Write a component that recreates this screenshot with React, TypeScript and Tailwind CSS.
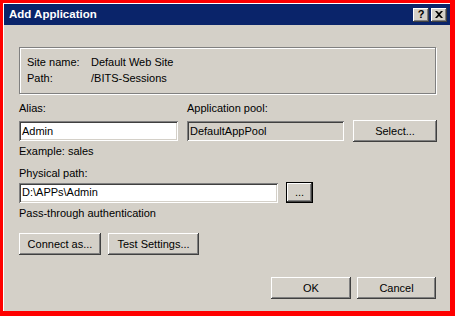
const raised =
  'bg-[#d4d0c8] shadow-[inset_-1px_-1px_#404040,inset_1px_1px_#ffffff,inset_-2px_-2px_#808080,inset_2px_2px_#d4d0c8]';
const sunken =
  'shadow-[inset_1px_1px_#808080,inset_-1px_-1px_#ffffff,inset_2px_2px_#404040,inset_-2px_-2px_#d4d0c8]';

function Button({ label, className = '' }: { label: string; className?: string }) {
  return (
    <div className={`${raised} flex items-center justify-center leading-none ${className}`}>
      {label}
    </div>
  );
}

function TextBox({ value, className = '', disabled = false }: { value: string; className?: string; disabled?: boolean }) {
  return (
    <div
      className={`${sunken} ${disabled ? 'bg-[#d4d0c8]' : 'bg-white'} h-[20px] flex items-center pl-[3px] leading-none ${className}`}
    >
      {value}
    </div>
  );
}

export default function App() {
  return (
    <div className="w-[455px] h-[316px] bg-[#ff0000] pl-[3px] pt-[3px] pr-[5px] pb-[5px] font-['Liberation_Sans',Arial,sans-serif] text-[11px] text-black">
      <div className="h-full flex flex-col bg-[#d4d0c8] border-l border-t border-white">
        {/* Title bar */}
        <div className="h-[21px] bg-[#0a246a] flex items-center justify-between pl-[5px] pr-[3px]">
          <span className="text-white font-bold text-[11.5px] leading-none">Add Application</span>
          <div className="flex gap-[2px]">
            <div className={`${raised} w-[16px] h-[14px] flex items-center justify-center font-bold text-[11px] leading-none`}>
              ?
            </div>
            <div className={`${raised} w-[16px] h-[14px] flex items-center justify-center`}>
              <svg width="8" height="7" viewBox="0 0 8 7">
                <path d="M0 0h2l2 2 2-2h2L5 3.5 8 7H6L4 5 2 7H0l3-3.5z" fill="#000" />
              </svg>
            </div>
          </div>
        </div>

        {/* Body */}
        <div className="flex-1 flex flex-col pl-[15px] pr-[13px]">
          {/* Group box */}
          <div className="mt-[22px] mr-[1px] h-[47px] border border-[#808080] shadow-[inset_1px_1px_#ffffff,1px_1px_#ffffff] pl-[7px] pt-[6px]">
            <div className="flex leading-[16px]">
              <span className="w-[64px]">Site name:</span>
              <span>Default Web Site</span>
            </div>
            <div className="flex leading-[16px]">
              <span className="w-[64px]">Path:</span>
              <span>/BITS-Sessions</span>
            </div>
          </div>

          {/* Alias / app pool */}
          <div className="mt-[8px] flex leading-[13px]">
            <span className="w-[168px]">Alias:</span>
            <span>Application pool:</span>
          </div>
          <div className="mt-[5px] flex items-start">
            <TextBox value="Admin" className="w-[159px] mt-[1px]" />
            <TextBox value="DefaultAppPool" disabled className="w-[157px] ml-[9px] mt-[1px]" />
            <Button label="Select..." className="w-[84px] h-[22px] ml-[9px]" />
          </div>
          <div className="mt-[3px] leading-[13px]">Example: sales</div>

          {/* Physical path */}
          <div className="mt-[9px] leading-[13px]">Physical path:</div>
          <div className="mt-[2px] flex items-center">
            <TextBox value="D:\APPs\Admin" className="w-[259px]" />
            <div className="ml-[8px] w-[27px] h-[21px] border border-black">
              <Button label="..." className="w-full h-full" />
            </div>
          </div>
          <div className="mt-[4px] leading-[13px]">Pass-through authentication</div>

          <div className="mt-[13px] flex gap-[7px]">
            <Button label="Connect as..." className="w-[82px] h-[22px]" />
            <Button label="Test Settings..." className="w-[91px] h-[22px]" />
          </div>

          <div className="mt-[22px] flex justify-end gap-[6px] mr-[1px]">
            <Button label="OK" className="w-[80px] h-[22px]" />
            <Button label="Cancel" className="w-[79px] h-[22px]" />
          </div>
        </div>
      </div>
    </div>
  );
}
